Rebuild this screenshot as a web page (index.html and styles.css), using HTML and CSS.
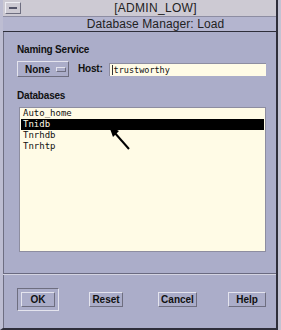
FILE: index.html
```html
<!DOCTYPE html>
<html>
<head>
<meta charset="utf-8">
<link rel="stylesheet" href="styles.css">
</head>
<body>
<div class="frame">
  <div class="titlebar">
    <span class="menu-btn"><span class="dash"></span></span>
    <span class="title">[ADMIN_LOW]</span>
  </div>
  <div class="subtitle">Database Manager: Load</div>
  <div class="panel">
    <div class="label">Naming Service</div>
    <div class="ns-row">
      <div class="opt-btn">None <span class="opt-ind"></span></div>
      <span class="label host">Host:</span>
      <div class="input"><span class="caret"></span>trustworthy</div>
    </div>
    <div class="label db-label">Databases</div>
    <div class="list">
      <div class="item">Auto_home</div>
      <div class="item selected">Tnidb</div>
      <div class="item">Tnrhdb</div>
      <div class="item">Tnrhtp</div>
    </div>
  </div>
  <div class="actions">
    <div class="default-ring"><div class="btn btn-ok">OK</div></div>
    <div class="btn btn-reset">Reset</div>
    <div class="btn btn-cancel">Cancel</div>
    <div class="btn btn-help">Help</div>
  </div>
  <svg class="arrow" width="30" height="30" viewBox="0 0 30 30">
    <line x1="22" y1="24" x2="7" y2="7" stroke="#000" stroke-width="2"/>
    <polygon points="2,1 12,6 6,12" fill="#000"/>
  </svg>
</div>
</body>
</html>
```

FILE: styles.css
```css
html, body {
  margin: 0;
  padding: 0;
}
body {
  width: 281px;
  height: 330px;
  overflow: hidden;
  background: #c3c3d3;
  font-family: "Liberation Sans", Arial, sans-serif;
  color: #111;
}
.frame {
  position: relative;
  box-sizing: border-box;
  width: 278px;
  height: 330px;
  background: #abadc9;
  border-left: 3px solid #bdbdd2;
  border-right: 2px solid #2e2e3a;
  border-bottom: 2px solid #2e2e3a;
  box-shadow: inset 1px 0 0 #6e6e82;
}
.titlebar {
  height: 16px;
  background: #cdcad3;
  border-bottom: 1px solid #8d8da2;
  display: flex;
  align-items: center;
  position: relative;
}
.menu-btn {
  width: 16px;
  height: 12px;
  margin-left: 2px;
  box-sizing: border-box;
  border: 1px solid;
  border-color: #eeeef4 #6e6e80 #6e6e80 #eeeef4;
  display: flex;
  align-items: center;
  justify-content: center;
}
.dash {
  width: 8px;
  height: 2px;
  background: #55556a;
}
.title {
  flex: 1;
  text-align: center;
  font-size: 12px;
  padding-left: 14px;
  letter-spacing: 0.3px;
  color: #222;
}
.subtitle {
  height: 14px;
  line-height: 14px;
  background: #b4b5cf;
  border-bottom: 1px solid #2e2e3a;
  text-align: center;
  font-size: 12px;
  padding-left: 32px;
  letter-spacing: 0.1px;
  color: #222;
}
.panel {
  padding: 12px 0 0 14px;
  height: 242px;
  box-sizing: border-box;
  border-bottom: 1px solid #6a6a80;
}
.label {
  font-size: 10px;
  font-weight: bold;
  line-height: 12px;
  letter-spacing: -0.2px;
}
.ns-row {
  display: flex;
  align-items: center;
  margin-top: 5px;
  height: 16px;
}
.opt-btn {
  box-sizing: border-box;
  width: 52px;
  height: 16px;
  border: 1px solid;
  border-color: #e4e4ee #6e6e80 #6e6e80 #e4e4ee;
  font-size: 10px;
  font-weight: bold;
  display: flex;
  align-items: center;
  padding-left: 7px;
  gap: 6px;
}
.opt-ind {
  width: 8px;
  height: 3px;
  border: 1px solid;
  border-color: #e4e4ee #6e6e80 #6e6e80 #e4e4ee;
}
.host {
  margin-left: 9px;
}
.input {
  margin-left: 6px;
  width: 157px;
  height: 13px;
  box-sizing: border-box;
  background: #fffbe6;
  border-top: 1px solid #8d8da0;
  border-left: 1px solid #8d8da0;
  font-family: "DejaVu Sans Mono", "Liberation Mono", monospace;
  font-size: 8.5px;
  line-height: 12px;
  display: flex;
  align-items: center;
  padding-left: 2px;
}
.caret {
  width: 1px;
  height: 10px;
  background: #333;
  margin-right: 1px;
}
.db-label {
  margin-top: 13px;
}
.list {
  margin-top: 5px;
  margin-left: 2px;
  width: 247px;
  height: 145px;
  box-sizing: border-box;
  background: #fffbe6;
  border: 1px solid #8d8da0;
  padding: 0 1px;
  font-family: "DejaVu Sans Mono", "Liberation Mono", monospace;
  font-size: 9px;
}
.item {
  height: 11px;
  line-height: 11px;
  padding-left: 2px;
}
.item.selected {
  background: #000;
  color: #fffbe6;
}
.actions {
  border-top: 1px solid #d4d4e2;
  display: flex;
  align-items: center;
  padding: 13px 0 0 14px;
}
.default-ring {
  box-sizing: border-box;
  width: 42px;
  height: 23px;
  border: 1px solid;
  border-color: #6e6e80 #e4e4ee #e4e4ee #6e6e80;
  display: flex;
  align-items: center;
  justify-content: center;
}
.btn {
  box-sizing: border-box;
  height: 15px;
  border: 1px solid;
  border-color: #e4e4ee #6e6e80 #6e6e80 #e4e4ee;
  font-size: 10px;
  font-weight: bold;
  display: flex;
  align-items: center;
  justify-content: center;
}
.btn-ok {
  width: 34px;
}
.btn-reset {
  width: 34px;
  margin-left: 30px;
}
.btn-cancel {
  width: 39px;
  margin-left: 35px;
}
.btn-help {
  width: 38px;
  margin-left: 31px;
}
.arrow {
  position: absolute;
  left: 104px;
  top: 125px;
}
```
